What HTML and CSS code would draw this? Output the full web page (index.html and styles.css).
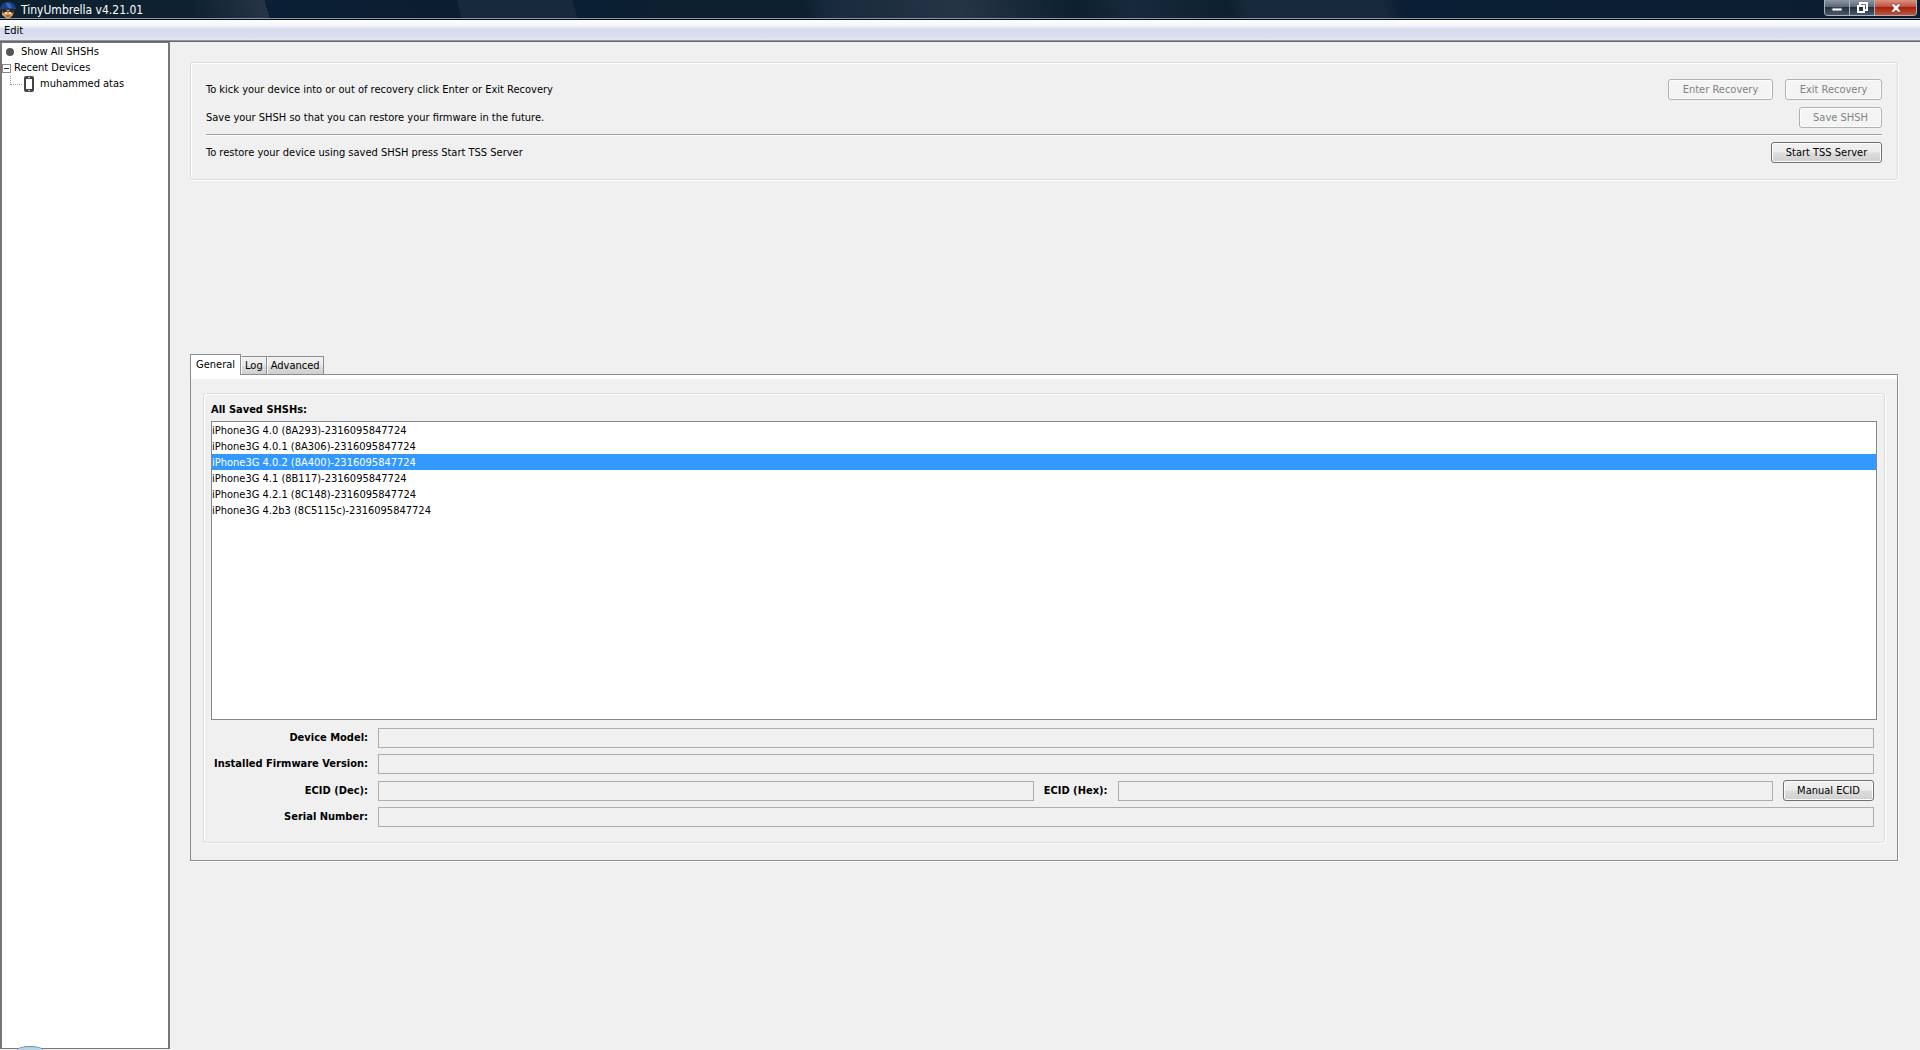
FILE: index.html
```
<!DOCTYPE html>
<html lang="en">
<head>
    <meta charset="UTF-8">
    <meta name="viewport" content="width=device-width, initial-scale=1.0">
    <title>TinyUmbrella v4.21.01</title>
    <link rel="stylesheet" href="styles.css">
</head>
<body>

    <!-- Title bar -->
    <header class="titlebar">
        <svg class="app-icon" viewBox="0 0 16 16" aria-hidden="true">
            <path d="M0 8C0 3 4 0 8 0c5 0 8 3 8 8l-4-1-4 1-4-1z" fill="#1d3f86"/>
            <path d="M6 1c3-1 5 1 6 5H8z" fill="#3c66b4"/>
            <path d="M2 8h12l-1 5-3 3H6l-4-3z" fill="#d99a5b"/>
            <path d="M1 7l5 1 2 2 2-2 5-1-2 4-3-1H6l-3 1z" fill="#3a2418"/>
            <circle cx="6" cy="11" r="1" fill="#fff"/>
            <circle cx="10" cy="11" r="1" fill="#fff"/>
            <path d="M6 14h4" stroke="#7a3d1c"/>
        </svg>
        <h1 class="title">TinyUmbrella v4.21.01</h1>
        <div class="window-controls">
            <button class="win-btn min-btn" aria-label="Minimize">
                <svg width="12" height="10" viewBox="0 0 12 10"><rect x="1" y="5" width="10" height="3" fill="#fff" stroke="#556"/></svg>
            </button>
            <button class="win-btn max-btn" aria-label="Restore">
                <svg width="12" height="12" viewBox="0 0 12 12" fill="none"><path d="M4 3V1h7v7H9" stroke="#fff" stroke-width="2"/><rect x="2" y="4" width="6" height="6" stroke="#fff" stroke-width="2"/></svg>
            </button>
            <button class="win-btn close-btn" aria-label="Close">
                <svg width="12" height="10" viewBox="0 0 12 10"><path d="M1 1h3l2 2 2-2h3L8 5l3 4H8L6 7 4 9H1l3-4z" fill="#fff" stroke="#6b3a3a" stroke-width=".5"/></svg>
            </button>
        </div>
    </header>

    <!-- Menu -->
    <nav class="menubar">
        <button class="menu-item">Edit</button>
    </nav>

    <div class="workspace">

        <!-- Device tree -->
        <aside class="sidebar">
            <ul class="tree">
                <li class="tree-row all-row">
                    <svg class="bullet" viewBox="0 0 10 10" aria-hidden="true"><circle cx="5" cy="5" r="4" fill="#555"/></svg>
                    <span>Show All SHSHs</span>
                </li>
                <li>
                    <div class="tree-row parent-row">
                        <button class="expander" aria-label="Collapse Recent Devices"></button>
                        <span>Recent Devices</span>
                    </div>
                    <ul class="tree">
                        <li class="tree-row device-row">
                            <span class="branch"></span>
                            <svg class="phone" viewBox="0 0 10 16" aria-hidden="true">
                                <rect width="10" height="16" rx="2" fill="#444"/>
                                <rect x="2" y="3" width="6" height="10" fill="#fff"/>
                                <path d="M4 14.500h2M4 1.500h2" stroke="#ccc"/>
                            </svg>
                            <span>muhammed atas</span>
                        </li>
                    </ul>
                </li>
            </ul>
        </aside>

        <main class="content">

            <!-- Recovery and TSS actions -->
            <section class="group actions">
                <div class="action-row">
                    <p>To kick your device into or out of recovery click Enter or Exit Recovery</p>
                    <div class="action-buttons">
                        <button class="btn btn-enter" disabled>Enter Recovery</button>
                        <button class="btn btn-exit" disabled>Exit Recovery</button>
                    </div>
                </div>
                <div class="action-row">
                    <p>Save your SHSH so that you can restore your firmware in the future.</p>
                    <button class="btn btn-save" disabled>Save SHSH</button>
                </div>
                <hr class="divider">
                <div class="action-row">
                    <p>To restore your device using saved SHSH press Start TSS Server</p>
                    <button class="btn btn-start">Start TSS Server</button>
                </div>
            </section>

            <!-- Tabs -->
            <section class="tabs">
                <div class="tab-list" role="tablist">
                    <button class="tab active" role="tab" aria-selected="true">General</button>
                    <button class="tab" role="tab" aria-selected="false">Log</button>
                    <button class="tab" role="tab" aria-selected="false">Advanced</button>
                </div>
                <div class="tab-panel" role="tabpanel">
                    <div class="group general">
                        <label class="list-label" for="shsh-list">All Saved SHSHs:</label>
                        <select class="shsh-list" id="shsh-list" size="18">
                            <option>iPhone3G 4.0 (8A293)-2316095847724</option>
                            <option>iPhone3G 4.0.1 (8A306)-2316095847724</option>
                            <option selected>iPhone3G 4.0.2 (8A400)-2316095847724</option>
                            <option>iPhone3G 4.1 (8B117)-2316095847724</option>
                            <option>iPhone3G 4.2.1 (8C148)-2316095847724</option>
                            <option>iPhone3G 4.2b3 (8C5115c)-2316095847724</option>
                        </select>
                        <div class="fields">
                            <label for="model">Device Model:</label>
                            <input class="field wide" id="model" type="text" readonly>
                            <label for="firmware">Installed Firmware Version:</label>
                            <input class="field wide" id="firmware" type="text" readonly>
                            <label for="ecid-dec">ECID (Dec):</label>
                            <input class="field" id="ecid-dec" type="text" readonly>
                            <label for="ecid-hex">ECID (Hex):</label>
                            <input class="field" id="ecid-hex" type="text" readonly>
                            <button class="btn btn-ecid">Manual ECID</button>
                            <label for="serial">Serial Number:</label>
                            <input class="field wide" id="serial" type="text" readonly>
                        </div>
                    </div>
                </div>
            </section>

        </main>
    </div>

    <!-- Tip of the start button showing over the window edge -->
    <div class="start-orb"></div>

</body>
</html>
```
FILE: styles.css
```
* {
    box-sizing: border-box;
    margin: 0;
    padding: 0;
}

body {
    display: flex;
    flex-direction: column;
    height: 100vh;
    overflow: hidden;
    background-color: #f0f0f0;
    color: #000;
    font: 11px/16px Tahoma, "DejaVu Sans Condensed", sans-serif;
}

button,
input,
select {
    font: inherit;
    color: inherit;
}

ul {
    list-style: none;
}

/* Title bar */
.titlebar {
    display: flex;
    align-items: center;
    height: 20px;
    padding-right: 3px;
    border-bottom: 1px solid #050b14;
    box-shadow: inset 0 -1px #8a97a3;
    background: linear-gradient(75deg, #0d2131 0%, #0d2131 10%, #263446 14%, #0a1e35 14%, #0b1e30 24%, #172a3b 24%, #172a3b 30%, #0a1e35 30%, #0c2030 35%, #0c2030 42%, #172a3b 43%, #263446 50%, #0c2030 56%, #172a3b 59%, #0c2030 64%, #172a3b 65%, #172a3b 72%, #0a1e35 73%, #0b1e30 100%);
}

.app-icon {
    width: 16px;
    height: 16px;
    margin-right: 5px;
}

.title {
    flex: 1;
    color: #fff;
    font-size: 12px;
    font-weight: normal;
}

.window-controls {
    display: flex;
    align-self: flex-start;
    height: 16px;
    border: 1px solid #a9b4bf;
    border-top: none;
    border-radius: 0 0 4px 4px;
    overflow: hidden;
}

.win-btn {
    display: flex;
    align-items: center;
    justify-content: center;
    width: 25px;
    border: none;
    border-right: 1px solid #a9b4bf;
    background: linear-gradient(#8c97a2, #5c6a78 45%, #22303e 50%, #4a5a6a);
}

.close-btn {
    width: 41px;
    border-right: none;
    background: linear-gradient(#d99382, #c2503c 45%, #a02412 50%, #c4543a);
}

/* Menu bar */
.menubar {
    display: flex;
    height: 21px;
    border-bottom: 1px solid #90949c;
    background: linear-gradient(#fff, #f3f5fb 30%, #d5dbec 45%, #dadff4 85%, #e2e6ef);
}

.menu-item {
    padding: 1px 4px 0;
    border: none;
    background: none;
}

/* Workspace */
.workspace {
    display: flex;
    flex: 1;
    min-height: 0;
    margin-bottom: 1px;
    border-top: 1px solid #666;
}

.sidebar {
    width: 170px;
    padding-top: 1px;
    border: 2px solid #777;
    border-width: 1px 2px;
    background-color: #fff;
}

.tree-row {
    display: flex;
    align-items: center;
    height: 16px;
}

.bullet {
    width: 10px;
    height: 10px;
}

.all-row {
    gap: 6px;
    padding-left: 3px;
}

.parent-row {
    gap: 3px;
}

.expander {
    width: 9px;
    height: 9px;
    border: 1px solid #888;
    background: linear-gradient(#333, #333) center / 5px 1px no-repeat #fff;
}

.branch {
    align-self: flex-start;
    width: 12px;
    height: 9px;
    margin: 0 2px 0 8px;
    border-bottom: 1px dotted #999;
    border-left: 1px dotted #999;
}

.phone {
    width: 10px;
    height: 16px;
    margin-right: 6px;
}

.content {
    flex: 1;
    min-width: 0;
    padding: 20px 22px 20px 20px;
}

/* Etched group box */
.group {
    border: 1px solid #dcdcdc;
    border-radius: 3px;
    box-shadow: inset 1px 1px #fff, 1px 1px #fff;
}

.actions {
    display: flex;
    flex-direction: column;
    gap: 7px;
    padding: 16px 15px;
}

.action-row {
    display: flex;
    align-items: center;
    justify-content: space-between;
}

.action-buttons {
    display: flex;
    gap: 12px;
}

.divider {
    height: 2px;
    margin: -1px 0;
    border: none;
    border-top: 1px solid #a0a0a0;
    border-bottom: 1px solid #fff;
}

/* Buttons */
.btn {
    height: 21px;
    border: 1px solid #707070;
    border-radius: 3px;
    box-shadow: inset 0 0 0 1px #fcfcfc;
    background: linear-gradient(#f2f2f2, #ebebeb 48%, #dddddd 52%, #cfcfcf);
    line-height: 17px;
}

.btn:disabled {
    border-color: #adb2b5;
    background: #f4f4f4;
    color: #838383;
}

.btn-enter {
    width: 105px;
}

.btn-exit {
    width: 97px;
}

.btn-save {
    width: 83px;
}

.btn-start {
    width: 111px;
}

/* Tabs */
.tabs {
    margin-top: 174px;
}

.tab-list {
    display: flex;
    align-items: flex-end;
}

.tab {
    height: 18px;
    padding: 1px 3px 0;
    border: 1px solid #898c95;
    border-bottom: none;
    border-left-color: #fff;
    background: linear-gradient(#f2f2f2, #ebebeb 48%, #dddddd 52%, #cfcfcf);
}

/* The open tab covers the panel's top border */
.tab.active {
    position: relative;
    height: 21px;
    margin-bottom: -1px;
    padding: 0 5px;
    border-left-color: #898c95;
    background: #fff;
}

.tab-panel {
    padding: 18px 12px 17px;
    border: 1px solid #898c95;
    box-shadow: inset 0 4px #fff, 1px 1px #fff;
}

.general {
    display: flex;
    flex-direction: column;
    padding: 8px 7px 15px;
}

.list-label,
.fields label {
    font-weight: bold;
}

.list-label {
    margin-bottom: 3px;
}

.shsh-list {
    height: 299px;
    border: 1px solid #828790;
    border-radius: 0;
    outline: none;
    background-color: #fff;
}

.shsh-list option {
    min-height: 16px;
    padding: 2px 0 1px;
}

.shsh-list option:checked {
    background: linear-gradient(#39f, #39f);
    color: #fff;
}

/* Device details */
.fields {
    display: grid;
    grid-template-columns: 157px 1fr 64px 1fr 91px;
    align-items: center;
    gap: 6px 10px;
    padding: 8px 3px 0 0;
}

.fields label {
    text-align: right;
    white-space: nowrap;
}

.field {
    width: 100%;
    height: 20px;
    border: 1px solid #abadb3;
    background-color: #f0f0f0;
}

.wide {
    grid-column: 2 / -1;
}

.start-orb {
    position: absolute;
    bottom: 0;
    left: 17px;
    width: 26px;
    height: 4px;
    border-top: 1px solid #6c93ad;
    border-radius: 50% 50% 0 0 / 100% 100% 0 0;
    background-color: #b9d3e4;
}
```
